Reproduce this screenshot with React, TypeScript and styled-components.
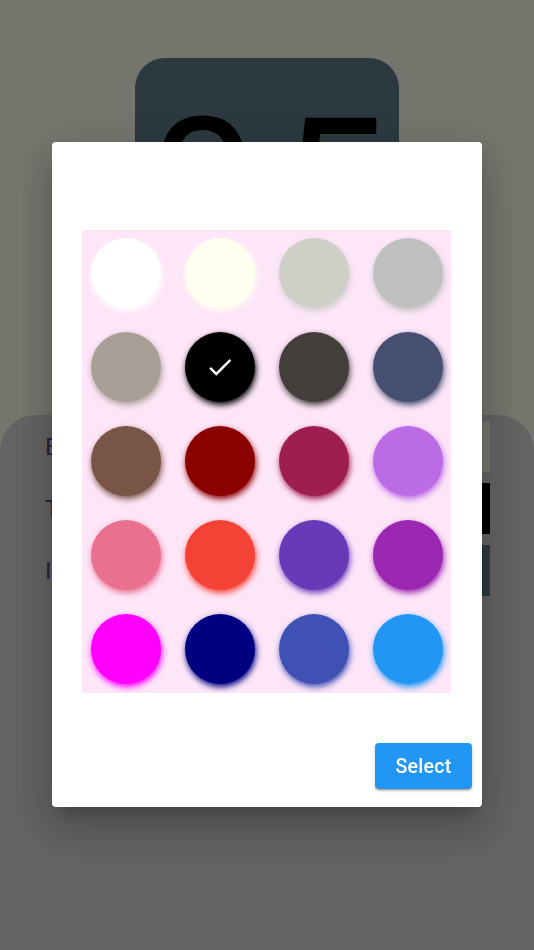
import React from 'react'
import styled, { createGlobalStyle } from 'styled-components'

const GlobalStyle = createGlobalStyle`
  html, body {
    margin: 0;
    padding: 0;
    font-family: Roboto, "Liberation Sans", sans-serif;
  }
`

const SWATCHES = [
  '#ffffff', '#fffff0', '#cfcfc8', '#c0c0c0',
  '#aa9f96', '#000000', '#433e3c', '#464e72',
  '#795548', '#8b0000', '#9e1f4f', '#bb6be6',
  '#e9708f', '#f44336', '#673ab7', '#9c27b0',
  '#ff00ff', '#000080', '#3f51b5', '#2196f3',
]

const SELECTED = '#000000'

const Page = styled.div`
  min-height: 950px;
  background: #fffff0;
  display: flex;
  flex-direction: column;
  align-items: center;
`

const Preview = styled.div`
  margin-top: 58px;
  width: 264px;
  height: 264px;
  box-sizing: border-box;
  padding: 34px 0 0 13px;
  border-radius: 30px;
  background: #607d8b;
  color: #000;
  font-size: 195px;
  line-height: 1;
  letter-spacing: 21px;
  white-space: nowrap;
`

const Sheet = styled.div`
  align-self: stretch;
  flex: 1;
  margin-top: 93px;
  padding: 6px 44px 0 45px;
  background: #dad5d7;
  border-radius: 36px 36px 0 0;
`

const Row = styled.div`
  display: flex;
  align-items: center;
  justify-content: space-between;
  height: 51px;
  margin-bottom: 11px;
`

const Label = styled.span`
  font-size: 24px;
  color: #4c5185;
`

const ColorBox = styled.div<{ $color: string }>`
  width: 140px;
  height: 51px;
  background: ${p => p.$color};
`

const Barrier = styled.div`
  position: fixed;
  inset: 0;
  background: rgba(0, 0, 0, 0.54);
`

const Dialog = styled.div`
  position: fixed;
  top: 142px;
  left: 52px;
  width: 430px;
  height: 665px;
  box-sizing: border-box;
  padding: 88px 10px 18px 30px;
  display: flex;
  flex-direction: column;
  background: #fff;
  border-radius: 4px;
  box-shadow: 0 11px 15px -7px rgba(0, 0, 0, 0.2),
    0 24px 38px 3px rgba(0, 0, 0, 0.14), 0 9px 46px 8px rgba(0, 0, 0, 0.12);
`

const Palette = styled.div`
  width: 369px;
  box-sizing: border-box;
  padding: 8px 9px 9px 9px;
  background: #fde6f8;
  display: grid;
  grid-template-columns: repeat(4, 70px);
  column-gap: 24px;
  row-gap: 24px;
`

const Swatch = styled.button<{ $color: string }>`
  width: 70px;
  height: 70px;
  padding: 0;
  border: none;
  border-radius: 50%;
  background: ${p => p.$color};
  box-shadow: 1px 3px 6px ${p => p.$color};
  display: flex;
  align-items: center;
  justify-content: center;
  cursor: pointer;
`

const Actions = styled.div`
  margin-top: auto;
  display: flex;
  justify-content: flex-end;
`

const SelectButton = styled.button`
  width: 97px;
  height: 46px;
  border: none;
  border-radius: 4px;
  background: #2196f3;
  color: #fff;
  font-family: Roboto, "Liberation Sans", sans-serif;
  font-size: 19.5px;
  font-weight: 500;
  letter-spacing: 0.3px;
  box-shadow: 0 3px 1px -2px rgba(0, 0, 0, 0.2), 0 2px 2px 0 rgba(0, 0, 0, 0.14),
    0 1px 5px 0 rgba(0, 0, 0, 0.12);
  cursor: pointer;
`

function CheckIcon() {
  return (
    <svg width="30" height="30" viewBox="0 0 24 24" fill="#fff">
      <path d="M9 16.17L4.83 12l-1.42 1.41L9 19 21 7l-1.41-1.41z" />
    </svg>
  )
}

function App() {
  return (
    <>
      <GlobalStyle />
      <Page>
        <Preview>05</Preview>
        <Sheet>
          <Row>
            <Label>Background</Label>
            <ColorBox $color="#fffff0" />
          </Row>
          <Row>
            <Label>Text</Label>
            <ColorBox $color="#000000" />
          </Row>
          <Row>
            <Label>Icon</Label>
            <ColorBox $color="#607d8b" />
          </Row>
        </Sheet>
      </Page>
      <Barrier />
      <Dialog>
        <Palette>
          {SWATCHES.map(c => (
            <Swatch key={c} $color={c}>
              {c === SELECTED && <CheckIcon />}
            </Swatch>
          ))}
        </Palette>
        <Actions>
          <SelectButton>Select</SelectButton>
        </Actions>
      </Dialog>
    </>
  )
}

export default App
